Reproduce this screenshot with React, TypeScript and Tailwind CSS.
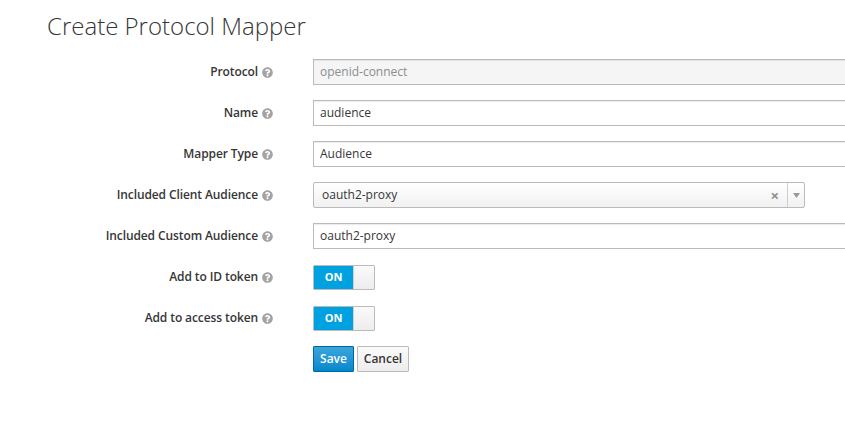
import { FaQuestionCircle } from 'react-icons/fa'

const FONT = { fontFamily: '"Open Sans", "Noto Sans", sans-serif' }

function Help() {
  return <FaQuestionCircle className="ml-[4px] inline-block h-[11px] w-[11px] text-[#a3a3a3]" />
}

function Row({ label, children }: { label: string; children: React.ReactNode }) {
  return (
    <div className="flex h-[26px] items-center">
      <div className="flex w-[273px] shrink-0 items-center justify-end text-[12px] font-semibold tracking-[-0.1px] text-[#363636]">
        <span>{label}</span>
        <Help />
      </div>
      <div className="ml-[40px] flex h-full min-w-0 flex-1 items-center">{children}</div>
    </div>
  )
}

function TextInput({ value, disabled }: { value: string; disabled?: boolean }) {
  return (
    <div
      className={
        'flex h-[26px] w-[600px] shrink-0 items-center border border-[#bbbbbb] px-[6px] text-[12px] shadow-[inset_0_1px_1px_rgba(3,3,3,0.08)] ' +
        (disabled ? 'bg-[#f5f5f5] text-[#8b8d8f]' : 'bg-white text-[#363636]')
      }
    >
      {value}
    </div>
  )
}

function Toggle() {
  return (
    <div className="flex h-[25px] w-[62px] overflow-hidden rounded-[1px] border border-[#bbbbbb]">
      <div className="flex w-[39px] items-center justify-center bg-[#00a1e0] text-[11px] font-bold text-white">ON</div>
      <div className="flex-1 border-l border-[#d1d1d1] bg-gradient-to-b from-[#fafafa] to-[#ededed]" />
    </div>
  )
}

export default function App() {
  return (
    <div className="h-[430px] w-[845px] overflow-hidden bg-white" style={FONT}>
      <h1 className="pl-[47px] pt-[9px] text-[24px] font-light leading-[34px] text-[#363636]">Create Protocol Mapper</h1>
      <div className="mt-[16px] flex flex-col gap-[15px]">
        <Row label="Protocol">
          <TextInput value="openid-connect" disabled />
        </Row>
        <Row label="Name">
          <TextInput value="audience" />
        </Row>
        <Row label="Mapper Type">
          <TextInput value="Audience" />
        </Row>
        <Row label="Included Client Audience">
          <div className="flex h-[26px] w-[492px] items-center rounded-[2px] border border-[#bbbbbb] bg-gradient-to-b from-white to-[#f1f1f1] text-[12px] text-[#363636]">
            <span className="flex-1 pl-[8px]">oauth2-proxy</span>
            <span className="mr-[8px] text-[15px] font-bold leading-none text-[#8f8f8f]">×</span>
            <div className="flex h-full w-[17px] items-center justify-center border-l border-[#cfcfcf]">
              <svg width="7" height="5" viewBox="0 0 7 5">
                <path d="M0 0h7L3.5 5z" fill="#999999" />
              </svg>
            </div>
          </div>
        </Row>
        <Row label="Included Custom Audience">
          <TextInput value="oauth2-proxy" />
        </Row>
        <Row label="Add to ID token">
          <Toggle />
        </Row>
        <Row label="Add to access token">
          <Toggle />
        </Row>
        <div className="ml-[313px] flex h-[26px] gap-[3px]">
          <button className="h-[26px] w-[41px] rounded-[1px] border border-[#00659c] bg-gradient-to-b from-[#39a5dc] to-[#0088ce] text-[12px] font-semibold text-white">
            Save
          </button>
          <button className="h-[26px] w-[52px] rounded-[1px] border border-[#bbbbbb] bg-gradient-to-b from-[#fafafa] to-[#ededed] text-[12px] font-semibold text-[#363636]">
            Cancel
          </button>
        </div>
      </div>
    </div>
  )
}
